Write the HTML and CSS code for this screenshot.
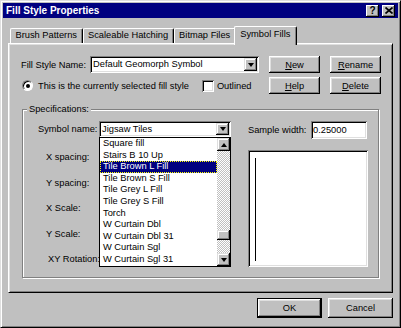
FILE: index.html
```html
<!DOCTYPE html>
<html lang="en">
<head>
  <meta charset="UTF-8">
  <title>Fill Style Properties</title>
  <link rel="stylesheet" href="styles.css">
</head>
<body>
  <div class="window">
    <div class="titlebar">
      <span class="title">Fill Style Properties</span>
      <span class="title-buttons">
        <span class="tbtn">?</span>
        <span class="tbtn">
          <svg width="8" height="7" viewBox="0 0 8 7"><path d="M0.5 0.5 L7.5 6.5 M7.5 0.5 L0.5 6.5" stroke="#000" stroke-width="1.7" fill="none"/></svg>
        </span>
      </span>
    </div>

    <div class="client">
      <div class="tabs">
        <div class="tab">Brush Patterns</div>
        <div class="tab">Scaleable Hatching</div>
        <div class="tab">Bitmap Files</div>
        <div class="tab active">Symbol Fills</div>
      </div>

      <div class="panel">
        <div class="row">
          <span class="name-lbl">Fill Style Name:</span>
          <div class="combo name-combo">
            <span class="combo-text">Default Geomorph Symbol</span>
            <span class="drop"></span>
          </div>
          <div class="actions">
            <button class="btn"><u>N</u>ew</button>
            <button class="btn"><u>R</u>ename</button>
          </div>
        </div>

        <div class="row">
          <span class="radio"></span>
          <span class="opt-text">This is the currently selected fill style</span>
          <span class="check"></span>
          <span class="check-text">Outlined</span>
          <div class="actions">
            <button class="btn"><u>H</u>elp</button>
            <button class="btn"><u>D</u>elete</button>
          </div>
        </div>

        <div class="group">
          <span class="legend">Specifications:</span>

          <div class="spec-left">
            <div class="sym-row">
              <span class="sym-lbl">Symbol name:</span>
              <div class="combo sym-combo">
                <span class="combo-text">Jigsaw Tiles</span>
                <span class="drop"></span>
                <div class="droplist">
                  <div class="options">
                    <div>Square fill</div>
                    <div>Stairs B 10 Up</div>
                    <div class="sel">Tile Brown L Fill</div>
                    <div>Tile Brown S Fill</div>
                    <div>Tile Grey L Fill</div>
                    <div>Tile Grey S Fill</div>
                    <div>Torch</div>
                    <div>W Curtain Dbl</div>
                    <div>W Curtain Dbl 31</div>
                    <div>W Curtain Sgl</div>
                    <div>W Curtain Sgl 31</div>
                  </div>
                  <div class="scrollbar">
                    <span class="sb-btn sb-up"></span>
                    <div class="sb-track"><span class="sb-thumb"></span></div>
                    <span class="sb-btn sb-down"></span>
                  </div>
                </div>
              </div>
            </div>
            <div class="spec-labels">
              <div>X spacing:</div>
              <div>Y spacing:</div>
              <div>X Scale:</div>
              <div>Y Scale:</div>
              <div class="rot-lbl">XY Rotation:</div>
            </div>
          </div>

          <div class="spec-right">
            <div class="sample-row">
              <span class="sample-lbl">Sample width:</span>
              <span class="field">0.25000</span>
            </div>
            <div class="sample-box"><div class="sample-line"></div></div>
          </div>
        </div>
      </div>

      <div class="footer">
        <button class="btn default">OK</button>
        <button class="btn">Cancel</button>
      </div>
    </div>
  </div>
</body>
</html>
```

FILE: styles.css
```css
* {
  box-sizing: border-box;
}
body {
  margin: 0;
  background: #c0c0c0;
  font-family: "Liberation Sans", Arial, sans-serif;
  font-size: 9.3px;
  color: #000;
}
.window {
  width: 401px;
  height: 328px;
  padding: 2px;
  border: 1px solid;
  border-color: #dfdfdf #000 #000 #dfdfdf;
  box-shadow: inset 1px 1px #fff, inset -1px -1px #808080;
  background: #c0c0c0;
}

/* title bar */
.titlebar {
  height: 15px;
  padding: 0 3px;
  display: flex;
  align-items: center;
  justify-content: space-between;
  background: #000080;
  color: #fff;
}
.title {
  font-size: 10px;
  font-weight: bold;
}
.title-buttons {
  display: flex;
  gap: 3px;
}
.tbtn {
  width: 13px;
  height: 12px;
  display: flex;
  align-items: center;
  justify-content: center;
  background: #c0c0c0;
  color: #000;
  font-size: 10px;
  font-weight: bold;
  line-height: 1;
  box-shadow: inset -1px -1px #000, inset 1px 1px #fff, inset -2px -2px #808080;
}

/* tabs */
.client {
  padding: 8px 5px 0;
}
.tabs {
  position: relative;
  z-index: 1;
  height: 17px;
  padding-left: 2px;
  display: flex;
  align-items: flex-end;
}
.tab {
  height: 15px;
  padding: 0 4.5px;
  line-height: 13px;
  white-space: nowrap;
  border: 1px solid #fff;
  border-bottom: none;
  border-right-color: #000;
  border-radius: 2px 2px 0 0;
  box-shadow: inset -1px 0 #808080;
  background: #c0c0c0;
}
.tab.active {
  height: 19px;
  margin: 0 -2px -2px;
  padding: 0 5.5px 4px;
  line-height: 14px;
}
.panel {
  height: 250px;
  padding: 12px 11px 0 12px;
  border: 1px solid;
  border-color: #fff #000 #000 #fff;
  box-shadow: inset 1px 1px #dfdfdf, inset -1px -1px #808080;
}

/* common controls */
.btn {
  width: 51px;
  height: 17px;
  padding: 0;
  border: none;
  background: #c0c0c0;
  font: inherit;
  color: #000;
  box-shadow: inset -1px -1px #000, inset 1px 1px #fff, inset -2px -2px #808080, inset 2px 2px #dfdfdf;
}
.btn.default {
  box-shadow: inset 0 0 0 1px #000, inset -2px -2px #000, inset 2px 2px #fff, inset -3px -3px #808080, inset 3px 3px #dfdfdf;
}
.combo {
  height: 17px;
  padding: 2px;
  display: flex;
  background: #fff;
  box-shadow: inset 1px 1px #808080, inset -1px -1px #fff, inset 2px 2px #000, inset -2px -2px #dfdfdf;
}
.combo-text {
  flex: 1;
  padding-left: 1px;
  line-height: 13px;
  white-space: nowrap;
  overflow: hidden;
}
.drop,
.sb-btn {
  width: 13px;
  display: flex;
  align-items: center;
  justify-content: center;
  background: #c0c0c0;
  box-shadow: inset -1px -1px #000, inset 1px 1px #dfdfdf, inset -2px -2px #808080, inset 2px 2px #fff;
}
.drop::after,
.sb-down::after {
  content: "";
  border-left: 3.5px solid transparent;
  border-right: 3.5px solid transparent;
  border-top: 4px solid #000;
}
.sb-up::after {
  content: "";
  border-left: 3.5px solid transparent;
  border-right: 3.5px solid transparent;
  border-bottom: 4px solid #000;
}
.field {
  width: 56px;
  height: 18px;
  padding-left: 2px;
  line-height: 18px;
  background: #fff;
  box-shadow: inset 1px 1px #808080, inset -1px -1px #fff, inset 2px 2px #000, inset -2px -2px #dfdfdf;
}

/* top rows */
.row {
  height: 17px;
  display: flex;
  align-items: center;
}
.row + .row {
  margin-top: 4px;
}
.name-lbl {
  width: 69px;
}
.name-combo {
  width: 169px;
}
.actions {
  margin-left: auto;
  display: flex;
  gap: 10px;
}
.radio {
  width: 11px;
  height: 11px;
  margin-left: 1px;
  display: flex;
  align-items: center;
  justify-content: center;
  border: 1px solid;
  border-color: #808080 #fff #fff #808080;
  border-radius: 50%;
  background: #fff;
  box-shadow: inset 1px 1px #000;
}
.radio::after {
  content: "";
  width: 4px;
  height: 4px;
  border-radius: 50%;
  background: #000;
}
.opt-text {
  margin-left: 5px;
}
.check {
  width: 12px;
  height: 12px;
  margin-left: 13px;
  background: #fff;
  box-shadow: inset 1px 1px #808080, inset -1px -1px #fff, inset 2px 2px #000, inset -2px -2px #dfdfdf;
}
.check-text {
  margin-left: 3px;
}

/* specifications group */
.group {
  position: relative;
  height: 169px;
  margin: 15px 2px 0 1px;
  padding: 11px 9px 0 15px;
  display: flex;
  border: 1px solid #808080;
  box-shadow: inset 1px 1px #fff, 1px 1px #fff;
}
.legend {
  position: absolute;
  top: -7px;
  left: 4px;
  padding: 0 2px;
  line-height: 12px;
  background: #c0c0c0;
}
.spec-left {
  width: 193px;
}
.sym-row {
  height: 16px;
  display: flex;
  align-items: center;
}
.sym-lbl {
  width: 61px;
}
.sym-combo {
  position: relative;
  width: 132px;
  height: 16px;
}
.droplist {
  position: absolute;
  top: 100%;
  left: 0;
  width: 132px;
  height: 130px;
  display: flex;
  border: 1px solid #000;
  background: #fff;
}
.options {
  flex: 1;
}
.options div {
  height: 11.6px;
  padding-left: 3px;
  line-height: 11.6px;
  white-space: nowrap;
}
.options .sel {
  background: #000080;
  color: #fff;
  outline: 1px dotted #ff0;
  outline-offset: -1px;
}
.scrollbar {
  width: 13px;
  display: flex;
  flex-direction: column;
}
.sb-btn {
  height: 13px;
}
.sb-track {
  flex: 1;
  display: flex;
  flex-direction: column;
  justify-content: flex-end;
  background: repeating-conic-gradient(#c0c0c0 0 25%, #fff 0 50%) 0 0 / 2px 2px;
}
.sb-thumb {
  height: 10px;
  margin-bottom: 13px;
  background: #c0c0c0;
  box-shadow: inset -1px -1px #000, inset 1px 1px #dfdfdf, inset -2px -2px #808080, inset 2px 2px #fff;
}
.spec-labels {
  margin-top: 8px;
}
.spec-labels div {
  height: 25.5px;
  padding-left: 8px;
  line-height: 25.5px;
}
.spec-labels .rot-lbl {
  padding-left: 10px;
}
.spec-right {
  width: 120px;
  margin-left: 17px;
}
.sample-row {
  height: 18px;
  display: flex;
  align-items: center;
}
.sample-lbl {
  width: 63px;
}
.sample-box {
  height: 117px;
  margin-top: 11px;
  padding: 8px 0 0 7px;
  background: #fff;
  box-shadow: inset 1px 1px #808080, inset -1px -1px #fff, inset 2px 2px #000, inset -2px -2px #dfdfdf;
}
.sample-line {
  width: 1px;
  height: 103px;
  background: #000;
}

/* dialog buttons */
.footer {
  margin-top: 5px;
  display: flex;
  justify-content: flex-end;
  gap: 6px;
}
.footer .btn {
  width: 65px;
  height: 20px;
}
```
